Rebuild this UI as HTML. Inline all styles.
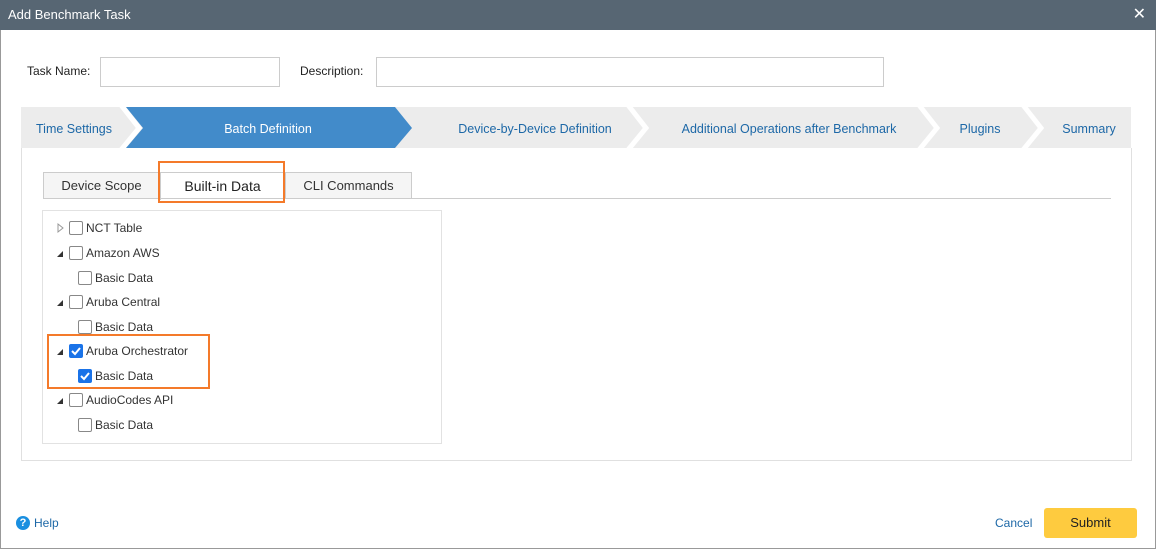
<!DOCTYPE html>
<html><head><style>
*{box-sizing:border-box;margin:0;padding:0}
body{width:1156px;height:549px;font-family:"Liberation Sans",sans-serif;font-size:12px;color:#333;background:#fff;position:relative;overflow:hidden}
.frame{position:absolute;left:0;top:0;width:1156px;height:549px;border:1px solid #999}
.title{position:absolute;left:0;top:0;width:1156px;height:30px;background:#576673;color:#fff;font-size:13px;line-height:30px;padding-left:8px}
.x{position:absolute;right:10px;top:0;color:#fff;font-size:16px}
.abs{position:absolute}
.inp{position:absolute;border:1px solid #ccc;background:#fff;height:30px}
.tab{position:absolute;top:172px;height:27px;border:1px solid #ccc;border-bottom:none;background:#f5f5f5;text-align:center;line-height:26px;font-size:13px;color:#333}
.row{position:absolute;left:0;height:20px;line-height:20px;font-size:12px;color:#333}
.cb{position:absolute;width:14px;height:14px;border:1px solid #888;border-radius:2px;background:#fff}
.cb.on{background:#1a73e8;border-color:#1a73e8}
.tri{position:absolute;width:0;height:0}
</style></head><body>
<div class="frame"></div>
<div class="title">Add Benchmark Task<span class="x">✕</span></div>
<div class="abs" style="left:27px;top:64px;font-size:12px;color:#222">Task Name:</div>
<div class="inp" style="left:100px;top:57px;width:180px"></div>
<div class="abs" style="left:300px;top:64px;font-size:12px;color:#222">Description:</div>
<div class="inp" style="left:376px;top:57px;width:508px"></div>

<svg class="abs" style="left:0;top:0" width="1156" height="160">
<rect x="21" y="107" width="1110" height="41" fill="#ececec"/>
<g fill="none" stroke="#fff" stroke-width="5">
<polyline points="121,105 139,128 121,150"/>
<polyline points="628,105 646,128 628,150"/>
<polyline points="919,105 937,128 919,150"/>
<polyline points="1023,105 1041,128 1023,150"/>
</g>
<polygon points="126,107 395,107 412,128 395,148 126,148 143,128" fill="#428bca"/>
<g font-family="Liberation Sans" font-size="12.5" fill="#1d68a7" text-anchor="middle">
<text x="74" y="133">Time Settings</text>
<text x="268" y="133" fill="#fff">Batch Definition</text>
<text x="535" y="133">Device-by-Device Definition</text>
<text x="789" y="133">Additional Operations after Benchmark</text>
<text x="980" y="133">Plugins</text>
<text x="1089" y="133">Summary</text>
</g>
</svg>
<div class="abs" style="left:21px;top:148px;width:1111px;height:313px;border:1px solid #e0e0e0;border-top:none"></div>

<div class="tab" style="left:43px;width:117px">Device Scope</div>
<div class="tab" style="left:160px;width:125px;background:#fff;height:28px;font-size:14px;color:#222">Built-in Data</div>
<div class="tab" style="left:285px;width:127px">CLI Commands</div>
<div class="abs" style="left:43px;top:198px;width:1068px;height:1px;background:#ccc"></div>
<div class="abs" style="left:412px;top:198px;width:699px;height:1px;background:#ccc"></div>
<div class="abs" style="left:158px;top:161px;width:127px;height:42px;border:2px solid #f47a2a"></div>

<div class="abs" style="left:42px;top:210px;width:400px;height:234px;border:1px solid #e2e2e2">
<svg class="abs" style="left:0;top:0" width="400" height="232">
<polygon points="15,13 20,17 15,21" fill="none" stroke="#999"/>
<polygon points="14,46 20,40 20,46" fill="#333"/>
<polygon points="14,95 20,89 20,95" fill="#333"/>
<polygon points="14,144 20,138 20,144" fill="#333"/>
<polygon points="14,193 20,187 20,193" fill="#333"/>
</svg>
<div class="cb" style="left:26px;top:10px"></div><div class="row" style="left:43px;top:7px">NCT Table</div>
<div class="cb" style="left:26px;top:35px"></div><div class="row" style="left:43px;top:32px">Amazon AWS</div>
<div class="cb" style="left:35px;top:60px"></div><div class="row" style="left:52px;top:57px">Basic Data</div>
<div class="cb" style="left:26px;top:84px"></div><div class="row" style="left:43px;top:81px">Aruba Central</div>
<div class="cb" style="left:35px;top:109px"></div><div class="row" style="left:52px;top:106px">Basic Data</div>
<div class="cb on" style="left:26px;top:133px"><svg width="12" height="12" style="position:absolute;left:0;top:0"><polyline points="2,6 5,9 10,3" fill="none" stroke="#fff" stroke-width="2"/></svg></div><div class="row" style="left:43px;top:130px">Aruba Orchestrator</div>
<div class="cb on" style="left:35px;top:158px"><svg width="12" height="12" style="position:absolute;left:0;top:0"><polyline points="2,6 5,9 10,3" fill="none" stroke="#fff" stroke-width="2"/></svg></div><div class="row" style="left:52px;top:155px">Basic Data</div>
<div class="cb" style="left:26px;top:182px"></div><div class="row" style="left:43px;top:179px">AudioCodes API</div>
<div class="cb" style="left:35px;top:207px"></div><div class="row" style="left:52px;top:204px">Basic Data</div>
</div>
<div class="abs" style="left:47px;top:334px;width:163px;height:55px;border:2px solid #f47a2a"></div>

<div class="abs" style="left:16px;top:516px;width:14px;height:14px;border-radius:50%;background:#1a8fe0;color:#fff;font-size:11px;font-weight:bold;text-align:center;line-height:14px">?</div>
<div class="abs" style="left:34px;top:516px;color:#1d68a7;font-size:12px">Help</div>
<div class="abs" style="left:995px;top:516px;color:#1d68a7;font-size:12px">Cancel</div>
<div class="abs" style="left:1044px;top:508px;width:93px;height:30px;background:#fecb3f;border-radius:3px;text-align:center;line-height:30px;font-size:13px;color:#222">Submit</div>
</body></html>
